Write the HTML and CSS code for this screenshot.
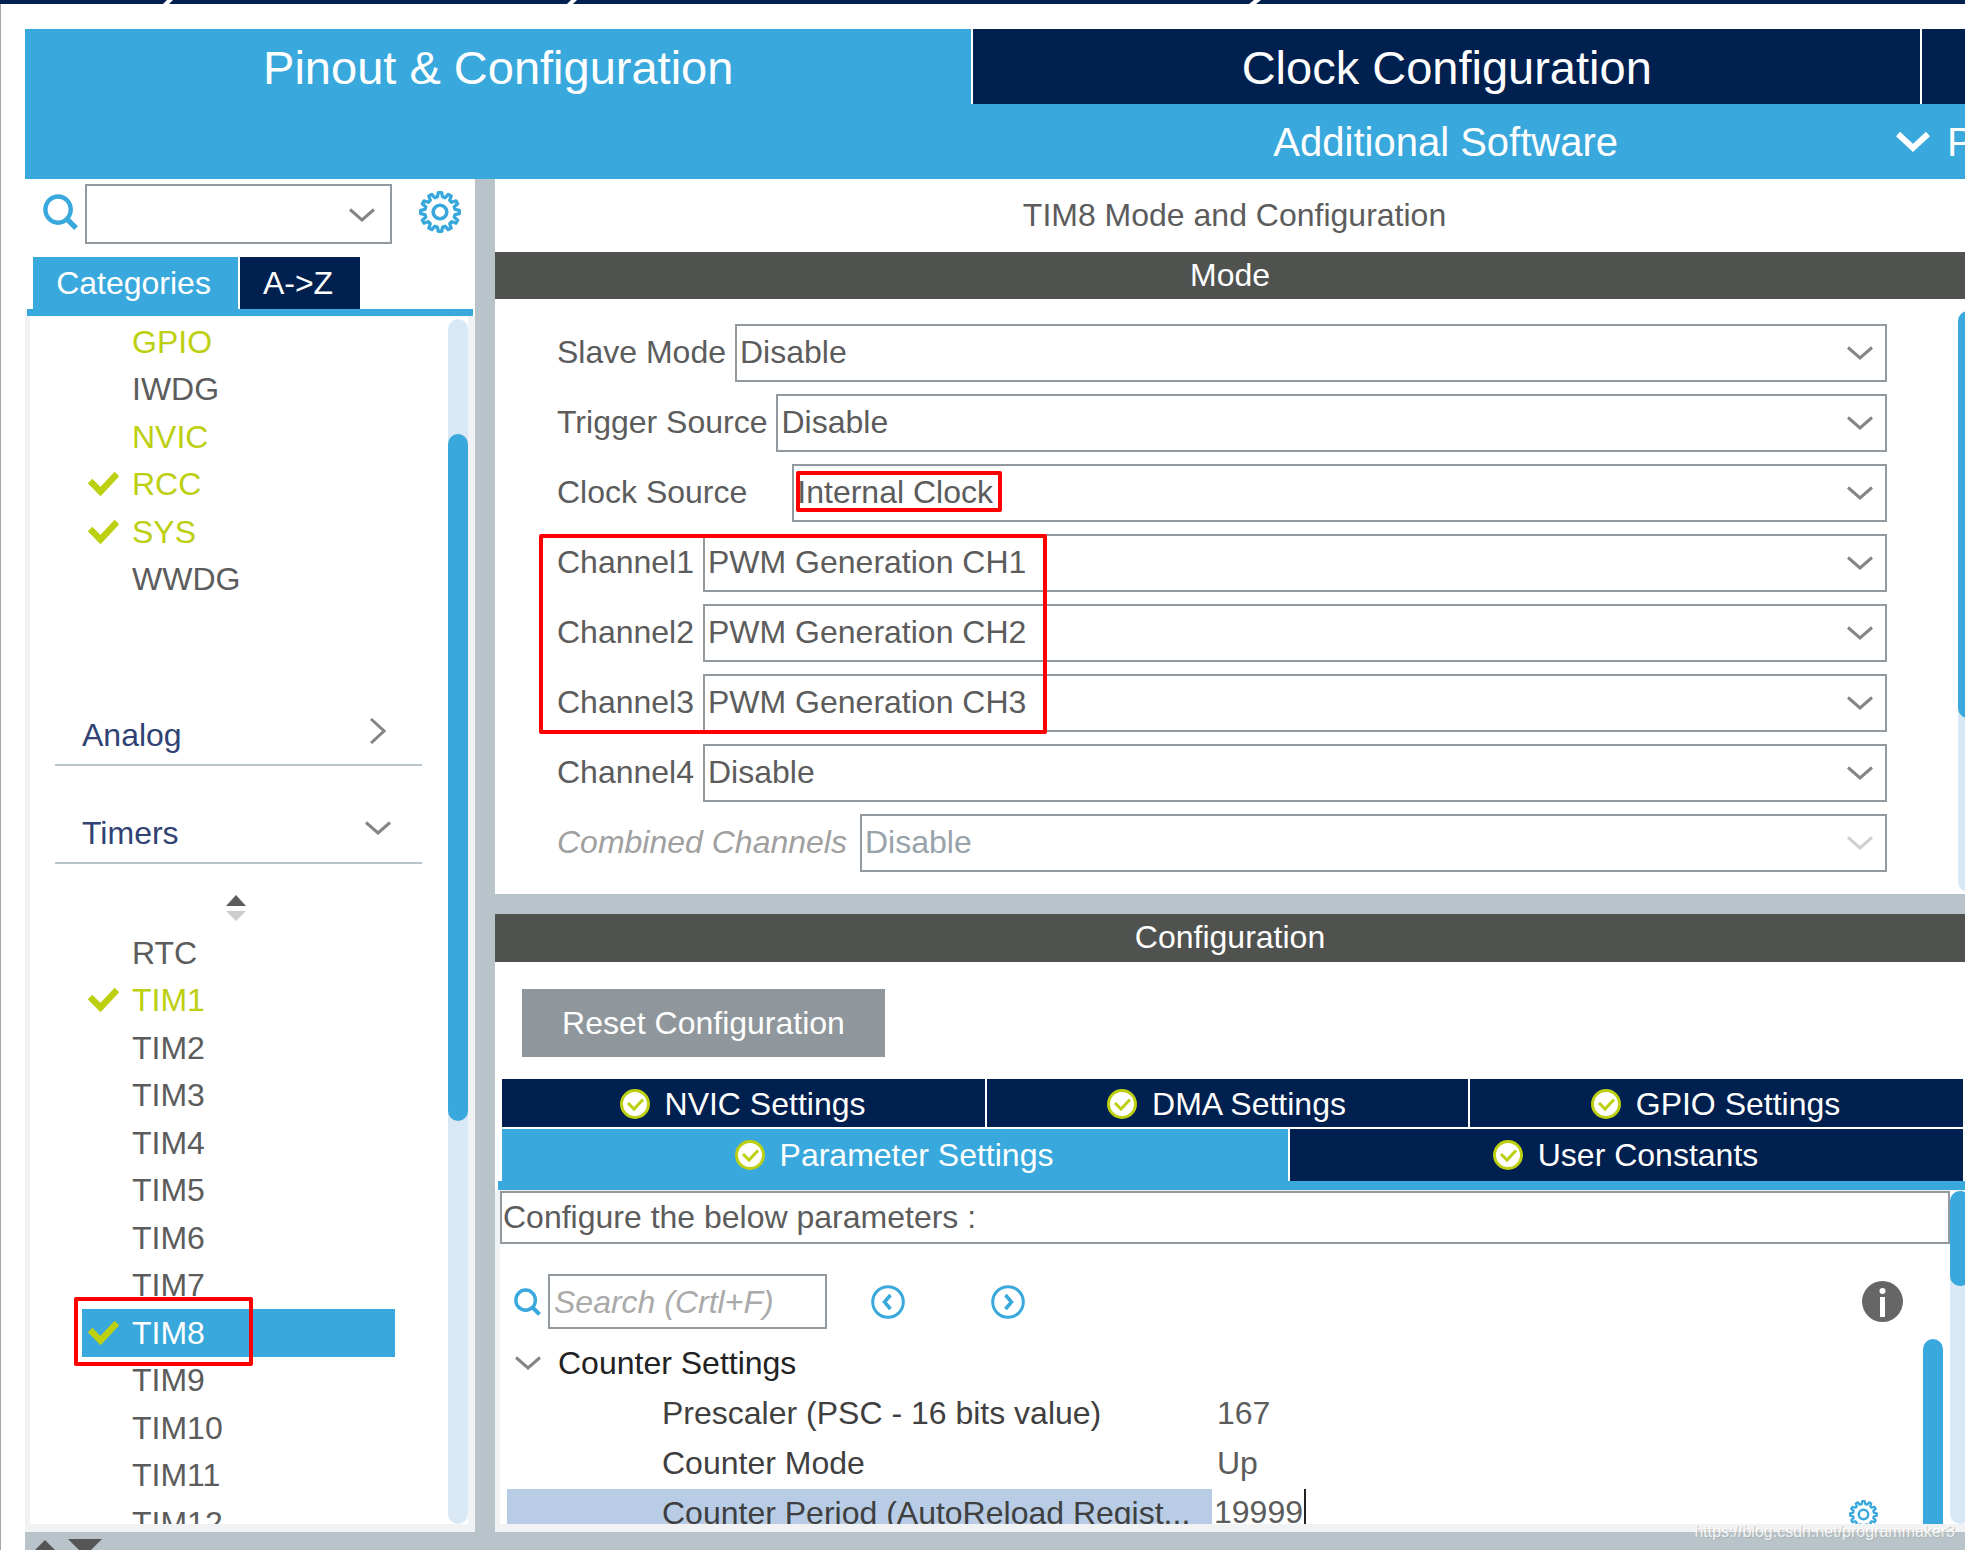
FILE: index.html
```html
<!DOCTYPE html>
<html lang="en">
<head>
<meta charset="utf-8">
<title>Pinout &amp; Configuration</title>
<link rel="stylesheet" href="styles.css">
</head>
<body>
<svg class="sprite" aria-hidden="true">
  <symbol id="down" viewBox="0 0 26 14"><path d="M1 1.500L13 12L25 1.500" fill="none" stroke="currentColor" stroke-width="3"/></symbol>
  <symbol id="right" viewBox="0 0 16 26"><path d="M1 1L14 13L1 25" fill="none" stroke="currentColor" stroke-width="3"/></symbol>
  <symbol id="tick" viewBox="0 0 31 26"><path d="M2 10L12.500 20.500L29 3" fill="none" stroke="currentColor" stroke-width="6.500"/></symbol>
  <symbol id="lens" viewBox="0 0 36 36"><ellipse cx="15.500" cy="15.500" rx="13" ry="13.500" fill="none" stroke="currentColor" stroke-width="4.500"/><path d="M24.500 25L34 34.500" stroke="currentColor" stroke-width="5.500"/></symbol>
  <symbol id="gear" viewBox="-20 -20 40 40"><path d="M18.400 1.600L14.300 2.500L13.600 5L16.800 7.800L15.200 10.600L11.100 9.300L9.300 11.100L10.600 15.200L7.800 16.800L5 13.600L2.500 14.300L1.600 18.400L-1.600 18.400L-2.500 14.300L-5 13.600L-7.800 16.800L-10.600 15.200L-9.300 11.100L-11.100 9.300L-15.200 10.600L-16.800 7.800L-13.600 5L-14.300 2.500L-18.400 1.600L-18.400 -1.600L-14.300 -2.500L-13.600 -5L-16.800 -7.800L-15.200 -10.600L-11.100 -9.300L-9.300 -11.100L-10.600 -15.200L-7.800 -16.800L-5 -13.600L-2.500 -14.300L-1.600 -18.400L1.600 -18.400L2.500 -14.300L5 -13.600L7.800 -16.800L10.600 -15.200L9.300 -11.100L11.100 -9.300L15.200 -10.600L16.800 -7.800L13.600 -5L14.300 -2.500L18.400 -1.600Z" fill="none" stroke="currentColor" stroke-width="3.200" stroke-linejoin="round"/><circle r="6.500" fill="none" stroke="currentColor" stroke-width="3.400"/></symbol>
  <symbol id="ok" viewBox="0 0 30 30"><circle cx="15" cy="15" r="13.500" fill="#fff" stroke="#bccf10" stroke-width="3"/><path d="M8 14L14 20L23 10.500" fill="none" stroke="#bccf10" stroke-width="3"/></symbol>
  <symbol id="prev" viewBox="0 0 34 34"><circle cx="17" cy="17" r="15.300" fill="none" stroke="currentColor" stroke-width="3"/><path d="M19.500 10L13.500 17L19.500 24" fill="none" stroke="currentColor" stroke-width="3.500"/></symbol>
  <symbol id="next" viewBox="0 0 34 34"><circle cx="17" cy="17" r="15.300" fill="none" stroke="currentColor" stroke-width="3"/><path d="M14.500 10L20.500 17L14.500 24" fill="none" stroke="currentColor" stroke-width="3.500"/></symbol>
</svg>

<div class="breadcrumb">
  <svg class="slants" aria-hidden="true"><path d="M163 4L167 0H173L169 4ZM567 4L571 0H577L573 4ZM1249 4L1254 0H1261L1256 4Z" fill="#fff"/></svg>
</div>

<div class="window">
  <header class="header">
    <div class="main-tabs">
      <button class="main-tab main-tab-on">Pinout &amp; Configuration</button>
      <button class="main-tab">Clock Configuration</button>
      <button class="main-tab" aria-label="Next tab"></button>
    </div>
    <div class="sub-tabs">
      <button class="sub-tab">Additional Software</button>
      <button class="sub-tab sub-menu">
        <svg class="menu-arrow" viewBox="0 0 34 22" aria-hidden="true"><path d="M2 3L17 17L32 3" fill="none" stroke="currentColor" stroke-width="6"/></svg>P</button>
    </div>
  </header>

  <div class="workspace">
    <aside class="sidebar">
      <div class="finder">
        <svg class="lens-large" aria-hidden="true"><use href="#lens"/></svg>
        <div class="select finder-select">
          <select aria-label="Find peripheral"><option></option></select>
          <svg class="chevron" aria-hidden="true"><use href="#down"/></svg>
        </div>
        <button class="gear-button" aria-label="Settings"><svg class="gear-large" aria-hidden="true"><use href="#gear"/></svg></button>
      </div>
      <div class="side-tabs">
        <button class="side-tab side-tab-on">Categories</button>
        <button class="side-tab side-tab-az">A-&gt;Z</button>
      </div>
      <div class="side-body">
        <div class="tree">
          <ul class="items">
            <li class="item used"><span class="mark"></span>GPIO</li>
            <li class="item"><span class="mark"></span>IWDG</li>
            <li class="item used"><span class="mark"></span>NVIC</li>
            <li class="item used"><svg class="mark" aria-hidden="true"><use href="#tick"/></svg>RCC</li>
            <li class="item used"><svg class="mark" aria-hidden="true"><use href="#tick"/></svg>SYS</li>
            <li class="item"><span class="mark"></span>WWDG</li>
          </ul>
          <button class="group group-first">Analog<svg class="group-right" aria-hidden="true"><use href="#right"/></svg></button>
          <button class="group">Timers<svg class="chevron" aria-hidden="true"><use href="#down"/></svg></button>
          <svg class="sort" viewBox="0 0 20 26" aria-hidden="true"><path d="M10 0L20 11H0Z" fill="#5c5c5c"/><path d="M0 16H20L10 26Z" fill="#ccc"/></svg>
          <ul class="items">
            <li class="item"><span class="mark"></span>RTC</li>
            <li class="item used"><svg class="mark" aria-hidden="true"><use href="#tick"/></svg>TIM1</li>
            <li class="item"><span class="mark"></span>TIM2</li>
            <li class="item"><span class="mark"></span>TIM3</li>
            <li class="item"><span class="mark"></span>TIM4</li>
            <li class="item"><span class="mark"></span>TIM5</li>
            <li class="item"><span class="mark"></span>TIM6</li>
            <li class="item"><span class="mark"></span>TIM7</li>
            <li class="item selected"><svg class="mark" aria-hidden="true"><use href="#tick"/></svg>TIM8<span class="note note-item"></span></li>
            <li class="item"><span class="mark"></span>TIM9</li>
            <li class="item"><span class="mark"></span>TIM10</li>
            <li class="item"><span class="mark"></span>TIM11</li>
            <li class="item"><span class="mark"></span>TIM12</li>
          </ul>
        </div>
        <div class="scroll side-scroll"><div class="thumb side-thumb"></div></div>
      </div>
    </aside>

    <main class="main">
      <section class="mode">
        <h1 class="title">TIM8 Mode and Configuration</h1>
        <h2 class="bar">Mode</h2>
        <div class="mode-body">
          <form class="fields">
            <div class="field"><label for="slave">Slave Mode</label><div class="select"><select id="slave"><option>Disable</option></select><svg class="chevron" aria-hidden="true"><use href="#down"/></svg></div></div>
            <div class="field"><label for="trigger">Trigger Source</label><div class="select"><select id="trigger"><option>Disable</option></select><svg class="chevron" aria-hidden="true"><use href="#down"/></svg></div></div>
            <div class="field"><label class="label-wide" for="clock">Clock Source</label><div class="select"><select id="clock"><option>Internal Clock</option></select><svg class="chevron" aria-hidden="true"><use href="#down"/></svg><span class="note note-value"></span></div></div>
            <div class="channels">
              <div class="field"><label for="ch1">Channel1</label><div class="select"><select id="ch1"><option>PWM Generation CH1</option></select><svg class="chevron" aria-hidden="true"><use href="#down"/></svg></div></div>
              <div class="field"><label for="ch2">Channel2</label><div class="select"><select id="ch2"><option>PWM Generation CH2</option></select><svg class="chevron" aria-hidden="true"><use href="#down"/></svg></div></div>
              <div class="field"><label for="ch3">Channel3</label><div class="select"><select id="ch3"><option>PWM Generation CH3</option></select><svg class="chevron" aria-hidden="true"><use href="#down"/></svg></div></div>
              <span class="note note-channels"></span>
            </div>
            <div class="field"><label for="ch4">Channel4</label><div class="select"><select id="ch4"><option>Disable</option></select><svg class="chevron" aria-hidden="true"><use href="#down"/></svg></div></div>
            <div class="field field-off"><label for="combined">Combined Channels</label><div class="select"><select id="combined" disabled><option>Disable</option></select><svg class="chevron" aria-hidden="true"><use href="#down"/></svg></div></div>
          </form>
          <div class="scroll mode-scroll"><div class="thumb mode-thumb"></div></div>
        </div>
      </section>

      <section class="config">
        <h2 class="bar">Configuration</h2>
        <button class="reset">Reset Configuration</button>
        <div class="tabs">
          <div class="tab-row tab-row-three">
            <button class="tab"><svg class="ok" aria-hidden="true"><use href="#ok"/></svg>NVIC Settings</button>
            <button class="tab"><svg class="ok" aria-hidden="true"><use href="#ok"/></svg>DMA Settings</button>
            <button class="tab"><svg class="ok" aria-hidden="true"><use href="#ok"/></svg>GPIO Settings</button>
          </div>
          <div class="tab-row tab-row-two">
            <button class="tab tab-on"><svg class="ok" aria-hidden="true"><use href="#ok"/></svg>Parameter Settings</button>
            <button class="tab"><svg class="ok" aria-hidden="true"><use href="#ok"/></svg>User Constants</button>
          </div>
        </div>
        <div class="config-body">
          <div class="params">
            <p class="hint">Configure the below parameters :</p>
            <div class="tools">
              <svg class="lens-small" aria-hidden="true"><use href="#lens"/></svg>
              <input class="search" type="text" placeholder="Search (Crtl+F)" aria-label="Search parameters">
              <button class="round" aria-label="Previous"><svg class="round-icon" aria-hidden="true"><use href="#prev"/></svg></button>
              <button class="round" aria-label="Next"><svg class="round-icon" aria-hidden="true"><use href="#next"/></svg></button>
              <button class="info" aria-label="Information"><svg class="info-icon" viewBox="0 0 41 41" aria-hidden="true"><circle cx="20.500" cy="20.500" r="20.500" fill="#666"/><circle cx="20.500" cy="10" r="3" fill="#fff"/><path d="M20.500 16V36" stroke="#fff" stroke-width="5"/></svg></button>
            </div>
            <div class="grid-area">
              <table class="grid">
                <tr><th class="grid-group" colspan="2"><svg class="grid-arrow" aria-hidden="true"><use href="#down"/></svg>Counter Settings</th></tr>
                <tr><td class="name">Prescaler (PSC - 16 bits value)</td><td class="value">167</td></tr>
                <tr><td class="name">Counter Mode</td><td class="value">Up</td></tr>
                <tr><td class="name name-on">Counter Period (AutoReload Regist...</td><td class="editing"><div class="editor"><input class="edit" type="text" value="19999" aria-label="Counter Period"><span class="caret"></span><svg class="gear-small" aria-hidden="true"><use href="#gear"/></svg></div></td></tr>
              </table>
              <div class="scroll grid-scroll"></div>
            </div>
          </div>
          <div class="scroll config-scroll"><div class="thumb config-thumb"></div></div>
        </div>
      </section>
    </main>
  </div>

  <footer class="footer">
    <svg class="handles" aria-hidden="true"><path d="M20 8L34 22H6Z" fill="#555"/><path d="M43 7H77L60 24Z" fill="#555"/></svg>
    <span class="watermark">https://blog.csdn.net/programmaker3</span>
  </footer>
</div>
</body>
</html>
```
FILE: styles.css
```css
:root {
  --blue: #39a8dc;
  --navy: #00204f;
  --dark: #505250;
  --gutter: #b8c4ca;
  --edge: #f0f2f4;
  --track: #d9e8f5;
  --line: #929a9f;
  --text: #5c5c5c;
  --lime: #bccf10;
}

* { box-sizing: border-box; }

body {
  margin: 0;
  height: 100vh;
  display: flex;
  flex-direction: column;
  overflow: hidden;
  background: #fff;
  color: var(--text);
  font-family: "Liberation Sans", Arial, sans-serif;
  font-size: 32px;
  line-height: 46px;
}

button, input, select {
  margin: 0;
  padding: 0;
  border: 0;
  border-radius: 0;
  background: none;
  color: inherit;
  font: inherit;
}

h1, h2, p, ul { margin: 0; padding: 0; font-size: 32px; font-weight: 400; }
ul { list-style: none; }
svg { display: block; flex: none; }
.sprite { position: absolute; width: 0; height: 0; }

.breadcrumb { flex: none; height: 4px; background: var(--navy); overflow: hidden; }
.slants { width: 100%; height: 4px; }

.window {
  flex: 1;
  min-height: 0;
  display: flex;
  flex-direction: column;
  padding: 25px 0 0 24px;
  border-left: 1px solid #a6a6a6;
}

/* Header */
.header { flex: none; background: var(--blue); color: #fff; }
.main-tabs {
  display: grid;
  grid-template-columns: 22fr 22fr 1fr;
  gap: 2px;
  height: 75px;
  background: #fff;
}
.main-tab { background: var(--navy); font-size: 47px; padding-top: 2px; min-width: 0; white-space: nowrap; }
.main-tab-on { background: var(--blue); }
.sub-tabs { display: flex; justify-content: flex-end; gap: 278px; height: 75px; }
.sub-tab { font-size: 40px; white-space: nowrap; }
.sub-menu { display: flex; align-items: center; gap: 17px; width: 69px; }
.menu-arrow { width: 34px; height: 22px; }

.workspace {
  flex: 1;
  min-height: 0;
  display: grid;
  grid-template-columns: 450px minmax(0, 1fr);
  grid-template-rows: minmax(0, 1fr);
  gap: 20px;
  background: var(--gutter);
}

/* Drop-downs */
.select { position: relative; display: flex; flex: 1; height: 58px; }
.select select {
  flex: 1;
  appearance: none;
  border: 2px solid var(--line);
  background: #fff;
  padding: 0 40px 2px 3px;
  color: var(--text);
  opacity: 1;
}
.chevron { width: 26px; height: 14px; color: #858585; }
.select .chevron { position: absolute; right: 14px; top: 22px; pointer-events: none; }

/* Scroll bars */
.scroll { flex: none; width: 20px; border-radius: 10px; background: var(--track); }
.thumb { border-radius: 10px; background: var(--blue); }

/* Sidebar */
.sidebar { display: flex; flex-direction: column; background: #fff; min-height: 0; }
.finder { display: flex; padding: 5px 14px 13px 18px; }
.lens-large { width: 35px; height: 36px; margin: 10px 7px 0 0; color: var(--blue); }
.finder-select { height: 60px; }
.finder-select .chevron { right: 17px; top: 24px; }
.gear-button { margin: 7px 0 0 27px; height: 42px; color: var(--blue); }
.gear-large { width: 42px; height: 42px; }
.side-tabs { display: flex; gap: 2px; height: 59px; margin: 0 2px; padding-left: 6px; border-bottom: 7px solid var(--blue); }
.side-tab { background: var(--navy); color: #fff; padding: 0 4px 1px 0; }
.side-tab-on { background: var(--blue); width: 205px; }
.side-tab-az { width: 120px; }
.side-body {
  flex: 1;
  min-height: 0;
  display: flex;
  border: solid var(--edge);
  border-width: 0 7px 8px 5px;
}
.tree { flex: 1; overflow: hidden; padding-top: 2px; }
.item {
  display: flex;
  align-items: center;
  gap: 13px;
  position: relative;
  width: 313px;
  height: 47px;
  margin-left: 52px;
  padding-left: 6px;
  padding-bottom: 1px;
}
.item:nth-child(odd) { height: 48px; }
.used { color: var(--lime); }
.mark { flex: none; width: 31px; height: 26px; color: var(--lime); }
.selected { background: var(--blue); color: #fff; }
.group {
  display: flex;
  align-items: center;
  justify-content: space-between;
  width: 367px;
  height: 60px;
  margin: 38px 0 0 25px;
  padding: 0 31px 0 27px;
  border-bottom: 2px solid var(--gutter);
  color: #2f4273;
}
.group-first { margin-top: 103px; }
.group-right { width: 16px; height: 26px; margin: 0 5px 8px 0; color: #858585; }
.group .chevron { margin-bottom: 10px; }
.sort { width: 20px; height: 26px; margin: 31px 0 8px 196px; }
.side-scroll { margin-top: 3px; padding-top: 115px; }
.side-thumb { height: 63%; }

/* Marker frames */
.note { position: absolute; border: 4px solid #fe0000; border-radius: 2px; pointer-events: none; }
.note-item { left: -8px; top: -12px; width: 179px; height: 69px; z-index: 1; }
.note-value { left: 4px; top: 7px; width: 206px; height: 41px; }
.note-channels { left: -18px; top: 0; width: 508px; height: 200px; }

/* Mode panel */
.main { display: flex; flex-direction: column; gap: 20px; min-height: 0; }
.mode { background: #fff; }
.title { height: 73px; padding: 13px 0 0 9px; text-align: center; }
.bar { height: 47px; padding-bottom: 1px; background: var(--dark); color: #fff; text-align: center; }
.mode-body { display: flex; padding: 12px 0 2px; overflow: hidden; }
.fields { flex: 1; display: flex; flex-direction: column; gap: 12px; padding: 13px 71px 20px 62px; }
.channels { position: relative; display: flex; flex-direction: column; gap: 12px; }
.field { display: flex; align-items: center; gap: 9px; }
.field label { padding-bottom: 2px; }
.field .label-wide { padding-right: 36px; }
.field-off label { font-style: italic; color: #a0a0a0; padding-right: 4px; }
.field-off select { color: #98a2a9; }
.field-off .chevron { color: #d0d0d0; }
.mode-scroll { margin-right: -13px; }
.mode-thumb { height: 70%; }

/* Configuration panel */
.config { flex: 1; min-height: 0; display: flex; flex-direction: column; background: #fff; }
.config .bar { flex: none; height: 48px; }
.reset { flex: none; width: 363px; height: 68px; margin: 27px 0 22px 27px; background: #8f979c; color: #fff; }
.tabs { flex: none; display: flex; flex-direction: column; gap: 2px; margin-left: 3px; padding: 0 2px 0 4px; border-bottom: 9px solid var(--blue); }
.tab-row { display: grid; gap: 2px; height: 48px; }
.tab-row-three { grid-template-columns: 483fr 481fr 493fr; }
.tab-row-two { grid-template-columns: 786fr 673fr; height: 52px; }
.tab { display: flex; align-items: center; justify-content: center; gap: 15px; background: var(--navy); color: #fff; min-width: 0; padding: 2px 2px 0 0; }
.tab-row-two .tab { padding: 0 2px 0 0; }
.tab-on { background: var(--blue); }
.ok { width: 30px; height: 30px; }
.config-body {
  flex: 1;
  min-height: 0;
  display: flex;
  overflow: hidden;
  border: solid var(--edge);
  border-width: 1px 0 8px 5px;
}
.params { flex: 1; min-width: 0; display: flex; flex-direction: column; }
.hint { flex: none; height: 53px; padding: 1px 0 0 1px; border: 2px solid var(--line); }
.tools { flex: none; display: flex; align-items: center; height: 55px; margin: 30px 47px 10px 14px; color: var(--blue); }
.lens-small { width: 27px; height: 28px; margin-right: 7px; }
.search { width: 279px; height: 55px; border: 2px solid var(--line); padding: 1px 4px 0; margin-right: 44px; }
.search::placeholder { color: #aaa; font-style: italic; opacity: 1; }
.round { margin-right: 86px; }
.round-icon { width: 34px; height: 34px; }
.info { margin-left: auto; }
.info-icon { width: 41px; height: 41px; }
.grid-area { flex: 1; min-height: 0; display: flex; overflow: hidden; padding: 0 7px; }
.grid { flex: 1; align-self: flex-start; border-collapse: collapse; color: #3f3f3f; }
.grid td, .grid th { height: 50px; padding: 0 0 3px; text-align: left; font-weight: 400; }
.grid .grid-group { padding-left: 8px; color: #222; display: flex; align-items: center; gap: 17px; }
.grid-arrow { width: 26px; height: 16px; color: #858585; }
.grid .name { width: 705px; padding-left: 155px; white-space: nowrap; }
.grid .name-on { background: #b8cde5; }
.grid .value { padding-left: 5px; color: var(--text); }
.grid .editing { padding: 0 45px 0 2px; }
.editor { display: flex; align-items: center; height: 50px; }
.edit { width: 90px; height: 50px; padding-bottom: 3px; color: var(--text); }
.caret { width: 2px; height: 50px; background: #222; }
.gear-small { width: 29px; height: 29px; margin-left: auto; color: var(--blue); }
.grid-scroll { height: 300px; background: var(--blue); }
.config-scroll { margin-right: -5px; }
.config-thumb { height: 95px; }

/* Footer strip */
.footer { flex: none; position: relative; height: 18px; background: var(--gutter); }
.handles { width: 120px; height: 18px; overflow: hidden; }
.watermark { position: absolute; right: 10px; bottom: 9px; font-size: 16px; line-height: 18px; color: #fff; opacity: .8; text-shadow: 1px 1px 1px #aaa; }
```
